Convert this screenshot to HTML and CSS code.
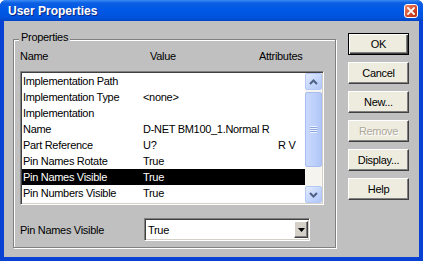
FILE: index.html
```html
<!DOCTYPE html>
<html lang="en">
<head>
  <meta charset="UTF-8" />
  <title>User Properties</title>
  <link rel="stylesheet" href="styles.css">
</head>
<body>

  <div class="window">
    <div class="titlebar">
      <span class="title">User Properties</span>
      <span class="close">
        <svg width="8" height="8" viewBox="0 0 8 8"><path d="M1 1 L7 7 M7 1 L1 7" stroke="#fff" stroke-width="1.8" stroke-linecap="square"/></svg>
      </span>
    </div>

    <div class="client">
      <div class="group">
        <span class="group-title">Properties</span>

        <div class="list-head">
          <span>Name</span>
          <span>Value</span>
          <span>Attributes</span>
        </div>

        <div class="listbox">
          <div class="rows">
            <div class="row"><span>Implementation Path</span><span></span><span></span></div>
            <div class="row"><span>Implementation Type</span><span>&lt;none&gt;</span><span></span></div>
            <div class="row"><span>Implementation</span><span></span><span></span></div>
            <div class="row"><span>Name</span><span>D-NET BM100_1.Normal R</span><span></span></div>
            <div class="row"><span>Part Reference</span><span>U?</span><span>R V</span></div>
            <div class="row"><span>Pin Names Rotate</span><span>True</span><span></span></div>
            <div class="row selected"><span>Pin Names Visible</span><span>True</span><span></span></div>
            <div class="row"><span>Pin Numbers Visible</span><span>True</span><span></span></div>
          </div>
          <div class="scrollbar">
            <div class="sb-btn">
              <svg width="9" height="6" viewBox="0 0 9 6"><path d="M1 5 L4.5 1.5 L8 5" fill="none" stroke="#4d6185" stroke-width="2"/></svg>
            </div>
            <div class="sb-track">
              <div class="sb-thumb"><span class="grip"></span></div>
            </div>
            <div class="sb-btn">
              <svg width="9" height="6" viewBox="0 0 9 6"><path d="M1 1 L4.5 4.5 L8 1" fill="none" stroke="#4d6185" stroke-width="2"/></svg>
            </div>
          </div>
        </div>

        <div class="edit-row">
          <label for="pinNames">Pin Names Visible</label>
          <div class="combo" id="pinNames">
            <span class="combo-text">True</span>
            <span class="combo-btn">
              <svg width="7" height="4" viewBox="0 0 7 4"><path d="M0 0 H7 L3.5 4 Z" fill="#000"/></svg>
            </span>
          </div>
        </div>
      </div>

      <div class="buttons">
        <button class="btn default">OK</button>
        <button class="btn">Cancel</button>
        <button class="btn">New...</button>
        <button class="btn" disabled>Remove</button>
        <button class="btn">Display...</button>
        <button class="btn">Help</button>
      </div>
    </div>
  </div>

</body>
</html>
```

FILE: styles.css
```css
* {
  box-sizing: border-box;
}

body {
  margin: 0;
  background: #fff;
  font-family: "Liberation Sans", Arial, sans-serif;
  font-size: 11px;
  letter-spacing: -0.3px;
  color: #000;
}

.window {
  width: 423px;
  height: 261px;
  display: flex;
  flex-direction: column;
  background: #0842d2;
  border-radius: 6px 6px 0 0;
  overflow: hidden;
}

.titlebar {
  height: 21px;
  flex: none;
  display: flex;
  align-items: center;
  justify-content: space-between;
  padding: 0 5px 0 8px;
  background: linear-gradient(#3a8cf6, #0b5fe2 3px, #0058e6 45%, #0052dc 85%, #0044c6);
  color: #fff;
}

.title {
  font-weight: bold;
  font-size: 12px;
  letter-spacing: 0;
  text-shadow: 1px 1px #0a2a80;
}

.close {
  width: 14px;
  height: 14px;
  display: flex;
  align-items: center;
  justify-content: center;
  border: 1px solid #fff;
  border-radius: 3px;
  background: linear-gradient(135deg, #ef8a6c, #d5492a 55%, #b8300f);
}

.client {
  flex: 1;
  margin: 0 4px 4px;
  background: #c0c0c0;
  display: flex;
  align-items: flex-start;
  gap: 12px;
  padding: 12px 10px 0 9px;
}

/* group box */
.group {
  position: relative;
  width: 323px;
  height: 209px;
  margin-top: 6px;
  padding: 10px 11px 0 6px;
  border: 1px solid #808080;
  box-shadow: inset 1px 1px #fff, 1px 1px #fff;
}

.group-title {
  position: absolute;
  top: -10px;
  left: 5px;
  padding: 0 2px;
  line-height: 14px;
  background: #c0c0c0;
}

.list-head {
  display: grid;
  grid-template-columns: 130px 109px 1fr;
  line-height: 13px;
  margin-bottom: 8px;
}

.listbox {
  height: 134px;
  display: flex;
  background: #fff;
  border: 1px solid;
  border-color: #808080 #fff #fff #808080;
  box-shadow: inset 1px 1px #404040, inset -1px -1px #d4d0c8;
  padding: 1px;
}

.rows {
  flex: 1;
  overflow: hidden;
}

.row {
  display: grid;
  grid-template-columns: 120px 135px 1fr;
  height: 16px;
  line-height: 16px;
  padding-left: 1px;
  white-space: nowrap;
}

.row.selected {
  background: #000;
  color: #fff;
}

/* xp scrollbar */
.scrollbar {
  width: 17px;
  display: flex;
  flex-direction: column;
  background: #f5f4ef;
}

.sb-btn {
  height: 17px;
  display: flex;
  align-items: center;
  justify-content: center;
  border: 1px solid #b4c8f6;
  border-radius: 2px;
  background: linear-gradient(135deg, #e3ebfe, #c2d4fc 60%, #b1c7f8);
}

.sb-track {
  flex: 1;
  padding-top: 2px;
}

.sb-thumb {
  height: 75px;
  display: flex;
  align-items: center;
  justify-content: center;
  border: 1px solid #a9bef0;
  border-radius: 2px;
  background: linear-gradient(to right, #cad9fd, #bccffb 60%, #b1c6f7);
}

.grip {
  width: 7px;
  height: 7px;
  background: repeating-linear-gradient(#eef3ff 0 1px, #8ca4df 1px 2px);
}

/* bottom editor */
.edit-row {
  display: flex;
  align-items: center;
  margin-top: 13px;
}

.edit-row label {
  width: 124px;
}

.combo {
  width: 166px;
  height: 23px;
  display: flex;
  align-items: center;
  background: #fff;
  border: 1px solid;
  border-color: #808080 #fff #fff #808080;
  box-shadow: inset 1px 1px #404040, inset -1px -1px #d4d0c8;
  padding: 1px 1px 1px 3px;
}

.combo-text {
  flex: 1;
}

.combo-btn {
  width: 14px;
  height: 17px;
  display: flex;
  align-items: center;
  justify-content: center;
  background: #d4d0c8;
  border: 1px solid;
  border-color: #fff #404040 #404040 #fff;
  box-shadow: inset -1px -1px #808080;
}

/* dialog buttons */
.buttons {
  width: 61px;
  display: flex;
  flex-direction: column;
  gap: 7px;
}

.btn {
  height: 22px;
  padding: 0;
  font: inherit;
  letter-spacing: inherit;
  color: #000;
  background: #eeecdf;
  border: 1px solid;
  border-color: #fff #404040 #404040 #fff;
  box-shadow: inset -1px -1px #808080;
}

.btn.default {
  border-color: #000;
  box-shadow: inset 1px 1px #fff, inset -1px -1px #404040, inset -2px -2px #808080;
}

.btn:disabled {
  color: #aca899;
  text-shadow: 1px 1px #fff;
}
```
